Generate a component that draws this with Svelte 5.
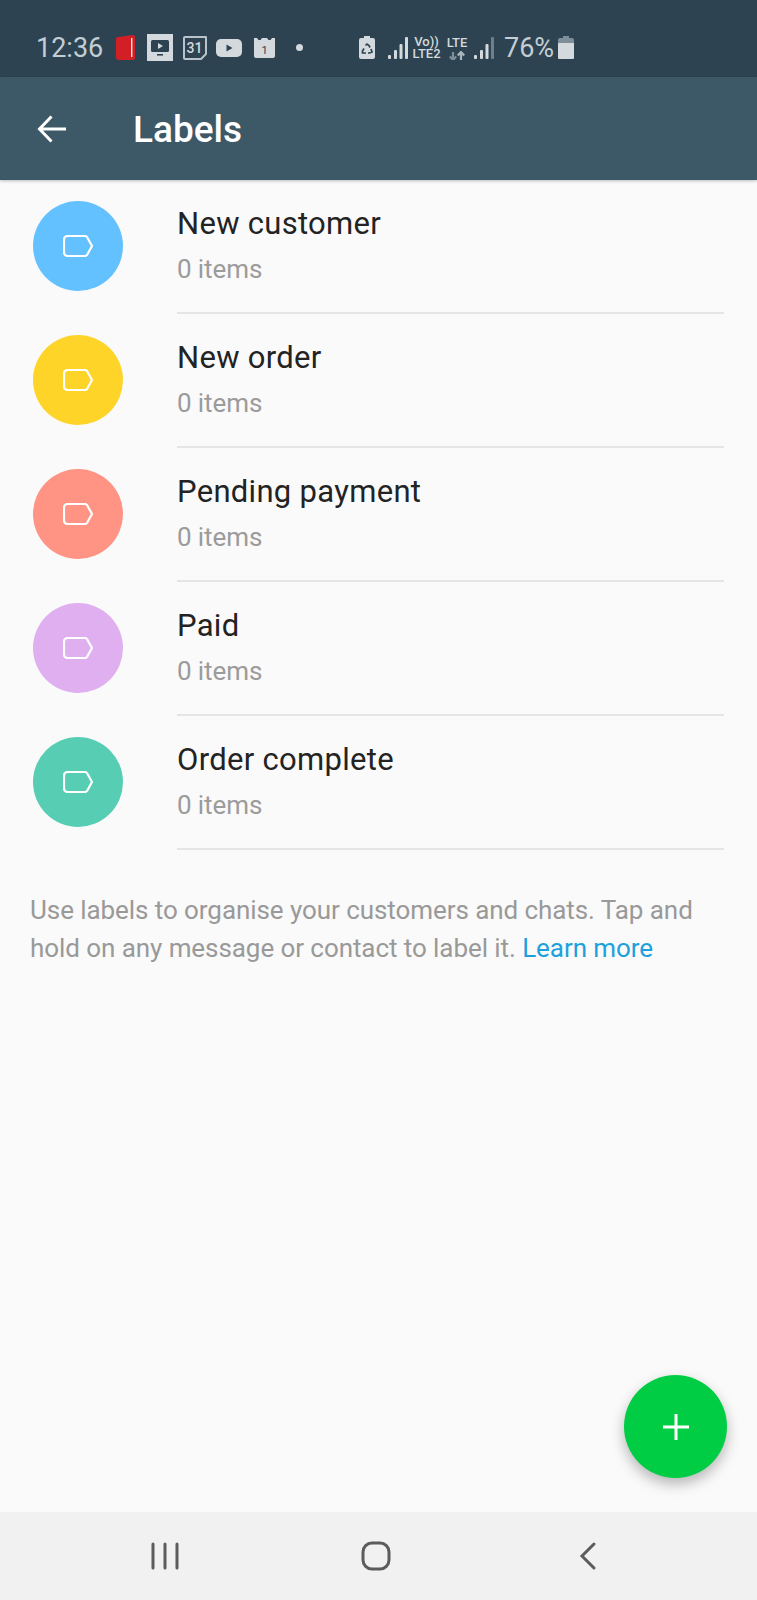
<script lang="ts">
	const labels = [
		{ name: 'New customer', color: '#64c1ff' },
		{ name: 'New order', color: '#ffd429' },
		{ name: 'Pending payment', color: '#ff9485' },
		{ name: 'Paid', color: '#dfaff0' },
		{ name: 'Order complete', color: '#57ceb4' }
	];
</script>

<div class="phone">
	<div class="status">
		<span class="time">12:36</span>
		<svg class="i-book" width="19" height="25" viewBox="0 0 19 25">
			<path d="M2 2 L17 0 Q19 0 19 2 V23 Q19 25 17 25 H3 Q0 25 0 22 V4 Q0 2 2 2Z" fill="#d21f26" />
			<rect x="15" y="3" width="1.4" height="19" fill="#f3e4e4" />
		</svg>
		<svg class="i-tv" width="26" height="27" viewBox="0 0 26 27">
			<rect width="26" height="27" fill="#d3d9dc" />
			<rect x="4" y="6" width="18" height="12" rx="1.5" fill="#2d4351" />
			<path d="M11 9 L16 12 L11 15Z" fill="#d3d9dc" />
			<rect x="10" y="20" width="6" height="1.6" fill="#2d4351" />
		</svg>
		<svg class="i-cal31" width="24" height="24" viewBox="0 0 24 24">
			<path d="M2 1 H23 V18 L18 23 H2 Q1 23 1 22 V2 Q1 1 2 1Z" stroke="#b9c3c9" stroke-width="2" fill="none" stroke-linejoin="round" />
			<text x="11.5" y="17" text-anchor="middle" font-size="14" font-weight="500" fill="#d3d9dc">31</text>
		</svg>
		<svg class="i-yt" width="26" height="18" viewBox="0 0 26 18">
			<rect width="26" height="18" rx="5" fill="#d3d9dc" />
			<path d="M10.5 5.5 L16.5 9 L10.5 12.5Z" fill="#2d4351" />
		</svg>
		<svg class="i-cal1" width="21" height="21" viewBox="0 0 21 21">
			<path d="M0 1 L3 1 L4.5 3 L6.5 3 L8 1 L13 1 L14.5 3 L16.5 3 L18 1 L21 1 V19 Q21 21 19 21 H2 Q0 21 0 19Z" fill="#d3d9dc" />
			<text x="10.5" y="17" text-anchor="middle" font-size="11" fill="#2d4351">1</text>
		</svg>
		<span class="dot"></span>
		<svg class="i-batt" width="16" height="23" viewBox="0 0 16 23">
			<path d="M5 0 H11 V2 H14 Q16 2 16 4 V21 Q16 23 14 23 H2 Q0 23 0 21 V4 Q0 2 2 2 H5Z" fill="#d3d9dc" />
			<path d="M6.5 9.5 L8 8 L10 9.5 L11 11.5 M12 13 L13 16 L10.5 17 H9 M7 17 H3.5 L3.5 15 L5 12.5" stroke="#2d4351" stroke-width="1.7" fill="none" />
		</svg>
		<svg class="i-sig" width="20" height="22" viewBox="0 0 20 22">
			<rect x="0" y="18" width="3" height="4" rx="1" fill="#d3d9dc" />
			<rect x="6" y="13" width="3" height="9" rx="1" fill="#d3d9dc" />
			<rect x="11.5" y="7" width="3" height="15" rx="1" fill="#d3d9dc" />
			<rect x="17" y="0" width="3" height="22" rx="1" fill="#d3d9dc" />
		</svg>
		<div class="volte"><span>Vo))</span><span>LTE2</span></div>
		<div class="lte">
			<span>LTE</span>
			<svg width="16" height="9" viewBox="0 0 16 9">
				<path d="M4 9 V1 M0.8 5.5 L4 9 L7.2 5.5" stroke="#7f8f99" stroke-width="2.2" fill="none" />
				<path d="M12 9 V1 M8.8 4.5 L12 1 L15.2 4.5" stroke="#a9b5bc" stroke-width="2.2" fill="none" />
			</svg>
		</div>
		<svg class="i-sig2" width="20" height="22" viewBox="0 0 20 22">
			<rect x="0" y="18" width="3" height="4" rx="1" fill="#d3d9dc" />
			<rect x="6" y="13" width="3" height="9" rx="1" fill="#d3d9dc" />
			<rect x="11.5" y="7" width="3" height="15" rx="1" fill="#d3d9dc" />
			<rect x="17" y="0" width="3" height="22" rx="1" fill="#6f808a" />
		</svg>
		<span class="pct">76%</span>
		<svg class="i-level" width="16" height="23" viewBox="0 0 16 23">
			<path d="M5 0 H11 V2 H14 Q16 2 16 4 V7 H0 V4 Q0 2 2 2 H5Z" fill="#7f8f99" />
			<path d="M0 7 H16 V22 Q16 23 15 23 H1 Q0 23 0 22Z" fill="#d3d9dc" />
		</svg>
	</div>

	<header class="appbar">
		<svg class="back" width="30" height="30" viewBox="0 0 30 30">
			<path d="M29 15 H3 M14.5 2.5 L2.5 15 L14.5 27.5" stroke="#fff" stroke-width="3" fill="none" />
		</svg>
		<h1>Labels</h1>
	</header>

	<main>
		<ul>
			{#each labels as label}
				<li>
					<div class="avatar" style="background: {label.color}">
						<svg width="30" height="22" viewBox="0 0 30 22">
							<path d="M5 1 H22 Q23 1 24 2 L29 11 L24 20 Q23 21 22 21 H5 Q1 21 1 17 V5 Q1 1 5 1Z" stroke="#fff" stroke-width="2.2" fill="none" stroke-linejoin="round" />
						</svg>
					</div>
					<div class="info">
						<div class="name">{label.name}</div>
						<div class="count">0 items</div>
					</div>
				</li>
			{/each}
		</ul>
		<p class="hint">
			Use labels to organise your customers and chats. Tap and hold on any message or contact to label it. <span class="link">Learn more</span>
		</p>
		<button class="fab" aria-label="Add label">
			<svg width="28" height="28" viewBox="0 0 28 28">
				<path d="M14 1 V27 M1 14 H27" stroke="#fff" stroke-width="3" />
			</svg>
		</button>
	</main>

	<nav class="navbar">
		<svg width="28" height="30" viewBox="0 0 28 30">
			<path d="M2 3 V27 M14 3 V27 M26 3 V27" stroke="#5c5c5c" stroke-width="3" stroke-linecap="round" />
		</svg>
		<svg width="30" height="30" viewBox="0 0 30 30">
			<rect x="2" y="2" width="26" height="26" rx="9" stroke="#5c5c5c" stroke-width="3" fill="none" />
		</svg>
		<svg width="20" height="30" viewBox="0 0 20 30">
			<path d="M16 3 L4 15 L16 27" stroke="#5c5c5c" stroke-width="3" stroke-linecap="round" fill="none" />
		</svg>
	</nav>
</div>

<style>
	:global(body) {
		margin: 0;
		background: #fafafa;
	}

	.phone {
		width: 757px;
		height: 1600px;
		display: flex;
		flex-direction: column;
		font-family: Roboto, sans-serif;
		background: #fafafa;
	}

	.status {
		height: 77px;
		flex: none;
		display: flex;
		align-items: center;
		padding: 18px 0 0 36px;
		background: #2d4351;
		color: #d3d9dc;
		box-sizing: border-box;
	}

	.status svg text {
		font-family: Roboto, sans-serif;
	}

	.time {
		font-size: 27px;
		width: 80px;
		color: #c3ced4;
	}

	.i-tv { margin-left: 12px; }
	.i-cal31 { margin-left: 10px; }
	.i-yt { margin-left: 9px; }
	.i-cal1 { margin-left: 12px; }

	.dot {
		margin-left: 21px;
		width: 7px;
		height: 7px;
		border-radius: 50%;
		background: #d3d9dc;
	}

	.i-batt { margin-left: 56px; }
	.i-sig { margin-left: 13px; }

	.volte {
		margin-left: 4px;
		width: 29px;
		display: flex;
		flex-direction: column;
		font-size: 13px;
		font-weight: 500;
		line-height: 12px;
		text-align: center;
		white-space: nowrap;
	}

	.lte {
		margin-left: 5px;
		width: 22px;
		display: flex;
		flex-direction: column;
		align-items: center;
		gap: 2px;
		font-size: 13px;
		font-weight: 500;
		line-height: 13px;
	}

	.i-sig2 { margin-left: 6px; }

	.pct {
		margin-left: 10px;
		width: 54px;
		font-size: 27px;
		color: #c3ced4;
	}

	.appbar {
		height: 103px;
		flex: none;
		display: flex;
		align-items: center;
		padding-left: 37px;
		box-sizing: border-box;
		background: #3d5866;
		box-shadow: 0 1px 3px rgba(0, 0, 0, 0.25);
		position: relative;
	}

	h1 {
		margin: 2px 0 0 66px;
		color: #fff;
		font-size: 37px;
		font-weight: 500;
	}

	main {
		flex: 1;
		position: relative;
	}

	ul {
		list-style: none;
		margin: 0;
		padding: 0;
	}

	li {
		height: 134px;
		display: flex;
		align-items: flex-start;
		padding-left: 33px;
		box-sizing: border-box;
	}

	.avatar {
		width: 90px;
		height: 90px;
		margin-top: 21px;
		border-radius: 50%;
		flex: none;
		display: flex;
		align-items: center;
		justify-content: center;
	}

	.info {
		margin-left: 54px;
		width: 547px;
		height: 134px;
		box-sizing: border-box;
		border-bottom: 2px solid #e5e5e5;
	}

	.name {
		margin-top: 24px;
		font-size: 31px;
		line-height: 40px;
		letter-spacing: 0.3px;
		color: #232323;
	}

	.count {
		margin-top: 9px;
		font-size: 26px;
		line-height: 32px;
		letter-spacing: -0.1px;
		color: #9b9b9b;
	}

	.hint {
		margin: 41px 28px 0 30px;
		font-size: 26px;
		line-height: 38px;
		letter-spacing: -0.07px;
		color: #999;
	}

	.link {
		color: #1da1dc;
	}

	.fab {
		position: absolute;
		left: 624px;
		top: 1195px;
		width: 103px;
		height: 103px;
		border: none;
		padding: 0;
		border-radius: 50%;
		background: #00cd44;
		box-shadow: 0 6px 14px rgba(0, 0, 0, 0.28);
		display: flex;
		align-items: center;
		justify-content: center;
	}

	.navbar {
		height: 88px;
		flex: none;
		display: flex;
		align-items: center;
		background: #f1f1f1;
		padding-left: 151px;
		box-sizing: border-box;
	}

	.navbar svg:nth-child(2) { margin-left: 182px; }
	.navbar svg:nth-child(3) { margin-left: 187px; }
</style>
